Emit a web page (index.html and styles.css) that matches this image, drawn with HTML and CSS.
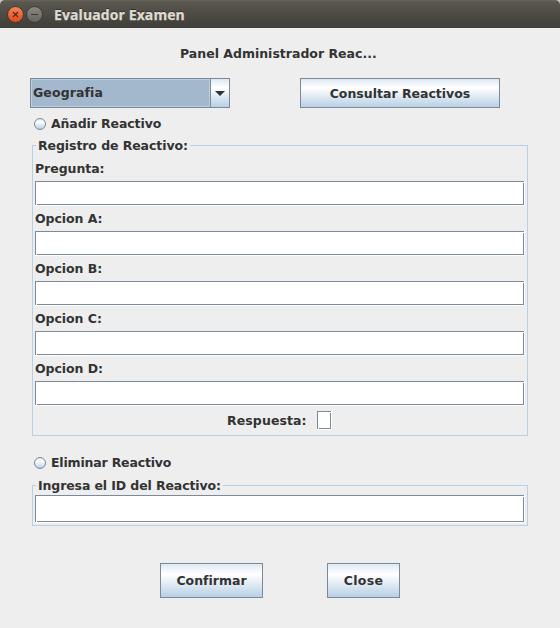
FILE: index.html
```html
<!DOCTYPE html>
<html lang="es">
<head>
<meta charset="utf-8">
<title>Evaluador Examen</title>
<link rel="stylesheet" href="styles.css">
</head>
<body>
<header class="titlebar">
  <svg class="controls" width="40" height="28" viewBox="0 0 40 28">
    <defs>
      <linearGradient id="close" x1="0" y1="0" x2="0" y2="1"><stop offset="0" stop-color="#f4845b"/><stop offset="1" stop-color="#df4b16"/></linearGradient>
      <linearGradient id="min" x1="0" y1="0" x2="0" y2="1"><stop offset="0" stop-color="#8b8981"/><stop offset="1" stop-color="#65635c"/></linearGradient>
    </defs>
    <circle cx="10.5" cy="14.5" r="8" fill="url(#close)" stroke="#393733"/>
    <path d="M8 12l5 5M13 12l-5 5" stroke="#51291b" stroke-width="1.2"/>
    <circle cx="29.5" cy="14.5" r="8" fill="url(#min)" stroke="#393733"/>
    <path d="M26 14.5h7" stroke="#3b3934"/>
  </svg>
  <h1 class="caption">Evaluador Examen</h1>
</header>
<main class="panel">
  <h2 class="heading">Panel Administrador Reac...</h2>
  <div class="toolbar">
    <div class="combo"><span class="combo-value">Geografia</span><span class="combo-arrow"><svg width="10" height="5" viewBox="0 0 10 5"><path d="M0 0h10L5 5z" fill="#333"/></svg></span></div>
    <button class="button wide">Consultar Reactivos</button>
  </div>
  <label class="option"><span class="radio"></span>Añadir Reactivo</label>
  <section class="group register">
    <h3 class="legend">Registro de Reactivo:</h3>
    <label class="row"><span class="name">Pregunta:</span><span class="field"></span></label>
    <label class="row"><span class="name">Opcion A:</span><span class="field"></span></label>
    <label class="row"><span class="name">Opcion B:</span><span class="field"></span></label>
    <label class="row"><span class="name">Opcion C:</span><span class="field"></span></label>
    <label class="row"><span class="name">Opcion D:</span><span class="field"></span></label>
    <div class="answer"><span class="answer-name">Respuesta:</span><span class="field small"></span></div>
  </section>
  <label class="option second"><span class="radio"></span>Eliminar Reactivo</label>
  <section class="group remove">
    <h3 class="legend">Ingresa el ID del Reactivo:</h3>
    <span class="field tall"></span>
  </section>
  <footer class="actions">
    <button class="button confirm">Confirmar</button>
    <button class="button close">Close</button>
  </footer>
</main>
</body>
</html>
```
FILE: styles.css
```css
* { box-sizing: border-box; }
body { margin: 0; width: 560px; height: 628px; overflow: hidden; background: #c9c6c2; }
h1, h2, h3 { margin: 0; font: inherit; }
.titlebar { display: flex; align-items: center; height: 28px; padding-left: 5px; border-radius: 5px 5px 0 0; background: linear-gradient(#65625a 0, #65625a 1px, #5a574f 2px, #3e3d38 28px); }
.controls { display: block; }
.caption { margin: 2px 0 0 9px; font: bold 14px/20px "Open Sans", sans-serif; letter-spacing: 0.1px; color: #dfdbd2; -webkit-text-stroke: 0.25px #dfdbd2; text-shadow: 0 -1px #33322e; }
.panel { height: 600px; background: #eee; font: bold 12.5px/16px "DejaVu Sans", sans-serif; color: #333; overflow: hidden; white-space: nowrap; }
.heading { margin: 18px 0 16px 180px; }
.toolbar { display: flex; gap: 70px; padding-left: 30px; }
.combo { display: flex; width: 200px; height: 30px; border: 1px solid #7a8a99; }
.combo-value { flex: 1; padding: 5px 0 0 1px; background: #a3b8cc; border: 1px solid #b8cfe5; line-height: 16px; letter-spacing: 0.1px; }
.combo-arrow { display: flex; align-items: center; justify-content: center; width: 19px; border-left: 1px solid #7a8a99; background: linear-gradient(#dde8f3, #fff 30%, #fff 32%, #b8cfe5); }
.button { padding: 0; border: 1px solid #7a8a99; border-radius: 0; background: linear-gradient(#dde8f3, #fff 30%, #fff 32%, #b8cfe5); color: #333; font: inherit; }
.wide { width: 200px; height: 30px; padding-top: 1px; }
.option { display: flex; align-items: center; height: 16px; margin: 8px 0 0 34px; letter-spacing: -0.1px; }
.radio { width: 12px; height: 12px; margin: -1px 5px 0 0; border: 1px solid #7a8a99; border-radius: 50%; background: linear-gradient(#dde8f3, #fff 30%, #b8cfe5); }
.group { width: 496px; margin-left: 32px; border: 1px solid #b8cfe5; padding: 0 2px; }
.register { height: 291px; margin-top: 13px; }
.legend { width: max-content; height: 16px; margin: -8px 0 0 1px; padding: 0 2px; background: #eee; letter-spacing: -0.08px; }
.row { display: block; height: 50px; }
.register .legend { margin-bottom: 7px; }
.name { display: block; height: 20px; letter-spacing: -0.05px; }
.field { display: block; width: 490px; height: 25px; background: linear-gradient(#7a8a99, #7a8a99) 0 0 / calc(100% - 1px) 1px no-repeat, linear-gradient(#7a8a99, #7a8a99) 0 0 / 1px calc(100% - 1px) no-repeat, linear-gradient(#7a8a99, #7a8a99) right 1px top 2px / 1px calc(100% - 3px) no-repeat, linear-gradient(#7a8a99, #7a8a99) left 2px bottom 1px / calc(100% - 3px) 1px no-repeat, #fff; }
.answer { display: flex; align-items: center; height: 19px; margin-left: 192px; }
.answer-name { width: 90px; letter-spacing: 0.1px; }
.small { width: 15px; height: 19px; }
.second { margin-top: 19px; letter-spacing: -0.18px; }
.remove { height: 41px; margin-top: 14px; }
.remove .legend { margin-bottom: 1px; letter-spacing: -0.11px; }
.tall { height: 28px; }
.actions { display: flex; gap: 64px; margin: 37px 0 0 160px; }
.confirm { width: 103px; height: 35px; }
.close { width: 73px; height: 35px; letter-spacing: 0.3px; }
```
